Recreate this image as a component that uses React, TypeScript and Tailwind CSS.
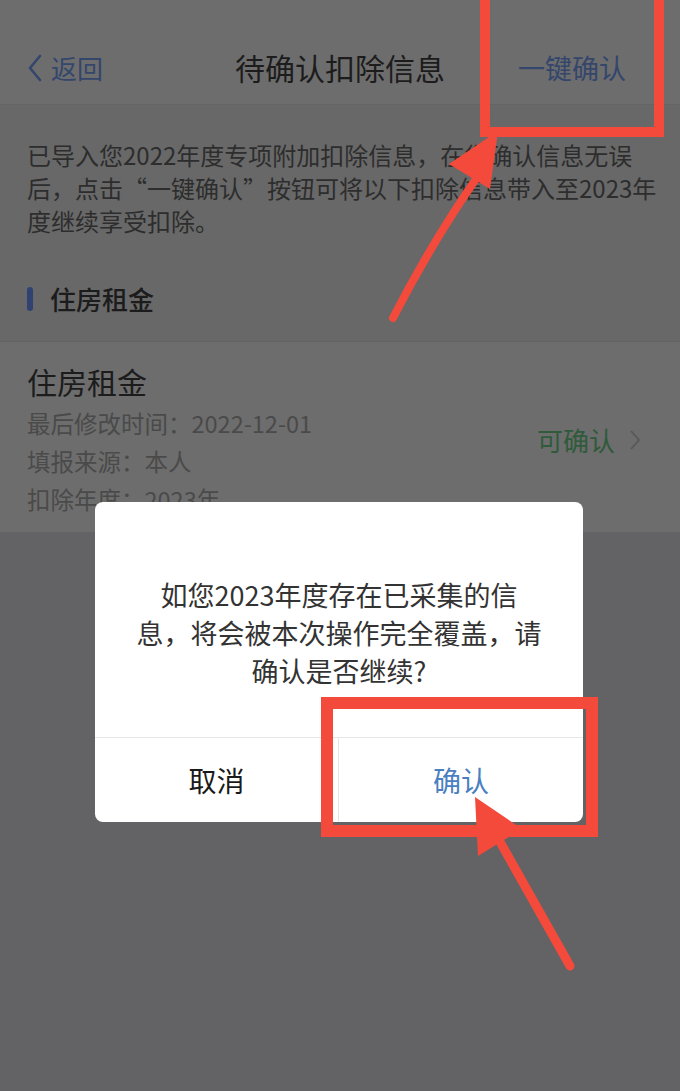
import React from "react";

const font = { fontFamily: '"Noto Sans CJK SC", "Noto Sans", sans-serif' };

const details = [
  { label: "最后修改时间：", value: "2022-12-01" },
  { label: "填报来源：", value: "本人" },
  { label: "扣除年度：", value: "2023年" },
];

const Annotations = () => (
  <svg
    className="absolute inset-0 pointer-events-none"
    width="680"
    height="1091"
    viewBox="0 0 680 1091"
  >
    {/* box round 一键确认 */}
    <rect x="485" y="-5" width="174" height="137" fill="none" stroke="#f44a3c" strokeWidth="10" />
    <path d="M393 318 Q 432 242 478 176" fill="none" stroke="#f44a3c" strokeWidth="8" strokeLinecap="round" />
    <polygon points="498,131 449,164 490,189" fill="#f44a3c" />

    {/* box round 确认 button */}
    <rect x="327" y="703" width="265" height="128" fill="none" stroke="#f44a3c" strokeWidth="12" />
    <path d="M570 966 L 499 840" fill="none" stroke="#f44a3c" strokeWidth="9" strokeLinecap="round" />
    <polygon points="475,797 522,829 478,856" fill="#f44a3c" />
  </svg>
);

export default function App() {
  return (
    <div className="relative w-[680px] h-[1091px] overflow-hidden bg-[#636365]" style={font}>
      {/* Header */}
      <header className="h-[105px] bg-[#6d6d6d] border-b border-[#646464] pt-[30px] grid grid-cols-[1fr_auto_1fr] items-center px-[27px]">
        <div className="flex items-center text-[#34466c] text-[26px] leading-[75px]">
          <svg width="16" height="28" viewBox="0 0 16 28" className="mr-[8px]">
            <path d="M13 2 L3 14 L13 26" fill="none" stroke="#34466c" strokeWidth="2.6" strokeLinecap="round" strokeLinejoin="round" />
          </svg>
          返回
        </div>
        <div className="text-[30px] text-[#1c1c1c] leading-[75px]">待确认扣除信息</div>
        <div className="flex justify-end pr-[27px] text-[27px] text-[#34466c] leading-[75px]">一键确认</div>
      </header>

      <main className="bg-[#686868]">
        <p className="px-[27px] pt-[33px] text-[24px] leading-[33px] text-[#2d2d2d] whitespace-nowrap">
          已导入您2022年度专项附加扣除信息，在您确认信息无误
          <br />
          后，点击“一键确认”按钮可将以下扣除信息带入至2023年
          <br />
          度继续享受扣除。
        </p>

        <div className="h-[86px] mt-[19px] flex items-center px-[27px] border-b border-[#626262]">
          <div className="w-[6px] h-[24px] rounded-sm bg-[#2f4272] mr-[17px]" />
          <span className="text-[26px] font-medium text-[#1c1c1c]">住房租金</span>
        </div>

        <section className="bg-[#6d6d6d] pt-[19px] pb-[14px] px-[27px] flex items-center justify-between">
          <div>
            <div className="text-[30px] leading-[40px] text-[#1c1c1c] mb-[3px]">住房租金</div>
            {details.map((d) => (
              <div key={d.label} className="text-[23.5px] leading-[38px] text-[#4a4a4a]">
                {d.label}
                {d.value}
              </div>
            ))}
          </div>
          <div className="flex items-center text-[26px] text-[#2f5a3b] mr-[12px]">
            可确认
            <svg width="12" height="22" viewBox="0 0 12 22" className="ml-[14px]">
              <path d="M2 2 L10 11 L2 20" fill="none" stroke="#585858" strokeWidth="1.8" />
            </svg>
          </div>
        </section>
      </main>

      {/* Dialog */}
      <div className="absolute left-[95px] top-[502px] w-[488px] h-[320px] bg-white rounded-[8px] flex flex-col">
        <div className="flex-1 pt-[74px] text-center text-[27px] leading-[38px] text-[#333333] whitespace-nowrap">
          如您2023年度存在已采集的信
          <br />
          息，将会被本次操作完全覆盖，请
          <br />
          确认是否继续?
        </div>
        <div className="h-[85px] border-t border-[#e6e6e6] grid grid-cols-2">
          <button className="text-[28px] text-[#1a1a1a] border-r border-[#e6e6e6]">取消</button>
          <button className="text-[28px] text-[#4a7fc1]">确认</button>
        </div>
      </div>

      <Annotations />
    </div>
  );
}
